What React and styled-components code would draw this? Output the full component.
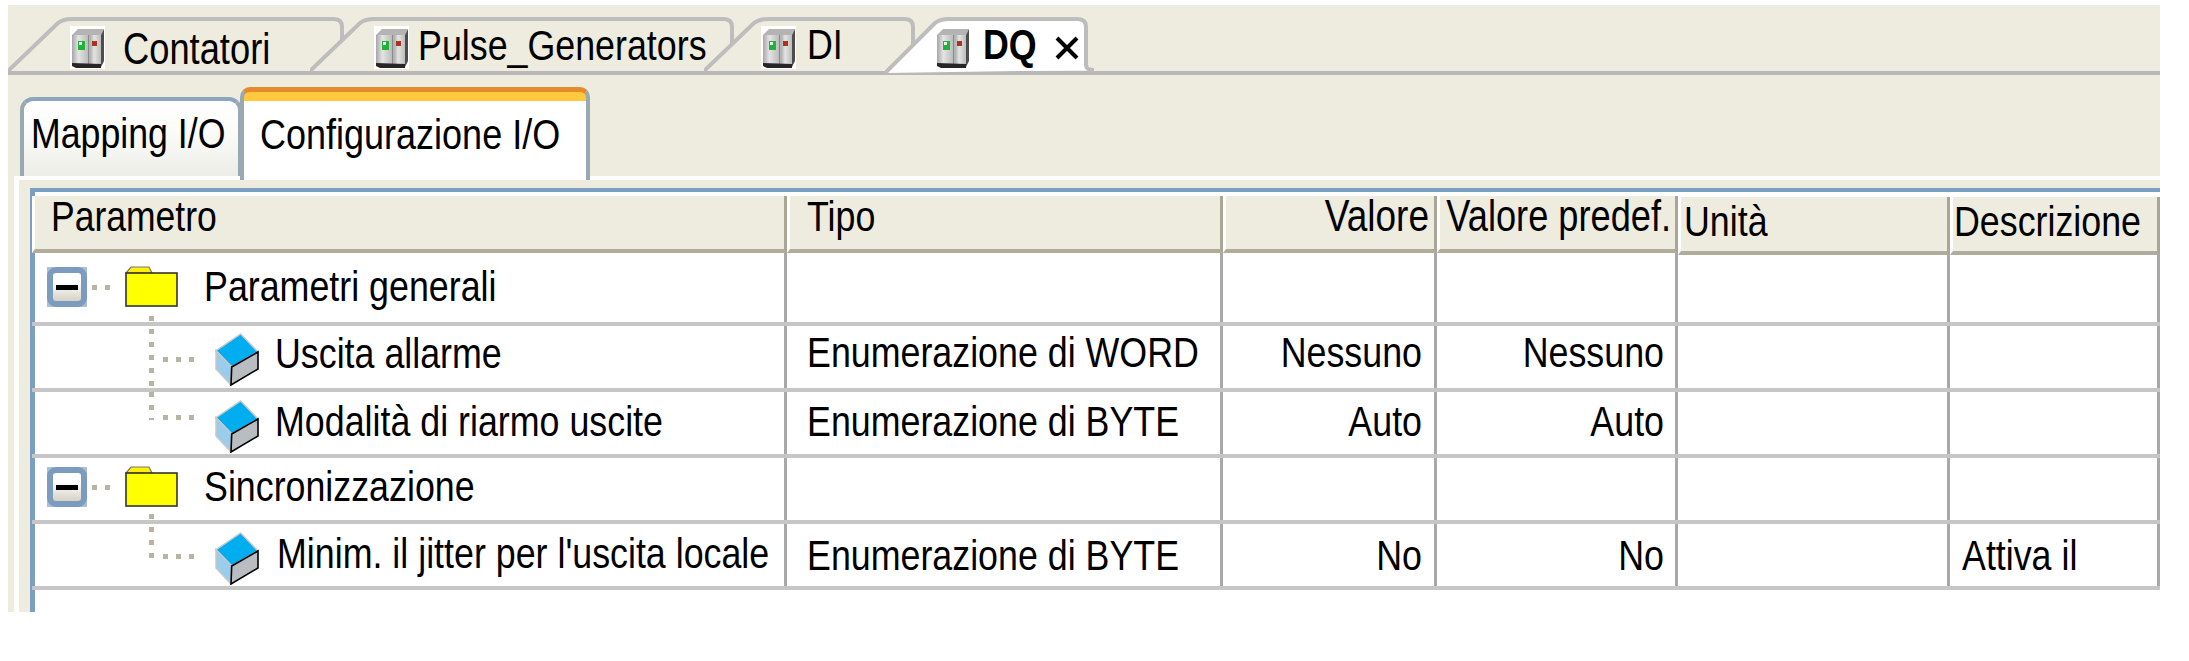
import styled, { createGlobalStyle } from "styled-components";

const GlobalStyle = createGlobalStyle`
  html, body {
    margin: 0;
    background: #fff;
    overflow: hidden;
  }
  * {
    box-sizing: border-box;
  }
`;

const BEIGE = "#eeebdf";
const COLS = "755px 436px 214px 241px 272px 210px";

const Shell = styled.div`
  width: 2152px;
  height: 607px;
  margin: 5px 0 0 8px;
  padding-top: 12px;
  background: ${BEIGE};
  overflow: hidden;
  display: flex;
  flex-direction: column;
  font-family: "Liberation Sans", Arial, sans-serif;
  color: #000;
`;

const Label = styled.span`
  display: inline-block;
  font-size: ${(p) => p.$size || 35.8}px;
  font-weight: ${(p) => (p.$bold ? 700 : 400)};
  line-height: 40px;
  white-space: nowrap;
  transform: scaleY(1.2);
`;

/* top document tabs */
const TabStrip = styled.div`
  display: flex;
  height: 58px;
  flex-shrink: 0;
  border-bottom: 4px solid #b8b8b8;
`;

const Tab = styled.div`
  position: relative;
  width: ${(p) => p.$w}px;
  height: ${(p) => (p.$active ? 58 : 54)}px;
  margin-left: ${(p) => p.$ml}px;
  padding-left: ${(p) => p.$pl}px;
  display: flex;
  align-items: flex-start;
  flex-shrink: 0;
`;

const TabOutline = styled.svg`
  position: absolute;
  left: 0;
  top: 0;
`;

const TabIcon = styled.svg`
  position: relative;
  margin-top: ${(p) => p.$y}px;
  flex-shrink: 0;
`;

const TabText = styled.div`
  position: relative;
  margin-top: ${(p) => p.$y}px;
  margin-left: ${(p) => p.$gap}px;
`;

const CloseIcon = styled.svg`
  position: relative;
  margin: 19px 0 0 18px;
  flex-shrink: 0;
`;

/* second row of tabs */
const SubTabs = styled.div`
  height: 101px;
  flex-shrink: 0;
  padding-left: 12px;
  display: flex;
  align-items: flex-end;
`;

const MappingTab = styled.div`
  width: 222px;
  height: 79px;
  padding: 13px 0 0 7px;
  border: 4px solid #9aa8b4;
  border-top-color: #8ba5bd;
  border-bottom: 0;
  border-radius: 13px 13px 0 0;
  background: linear-gradient(#fff, #fbfbf9 40%, #edede7);
`;

const ConfigTab = styled.div`
  position: relative;
  z-index: 1;
  width: 350px;
  height: 93px;
  margin: 0 0 -4px -2px;
  padding: 23px 0 0 16px;
  border: 4px solid #9aa8b4;
  border-top: 5px solid #e68a2e;
  border-bottom: 0;
  border-radius: 10px 10px 0 0;
  background: linear-gradient(#ffc83d 0 9px, #fff 9px);
`;

/* panel with the table */
const Panel = styled.div`
  flex: 1;
  margin-left: 6px;
  padding: 8px 0 0 11px;
  border-top: 4px solid #fff;
  border-left: 5px solid #fff;
  display: flex;
`;

const Frame = styled.div`
  flex: 1;
  padding-top: 4px;
  background: #fff;
  border-top: 4px solid #7a9fc2;
  border-left: 5px solid #7a9fc2;
`;

const HeaderRow = styled.div`
  height: 57px;
  margin-left: -3px;
  display: grid;
  grid-template-columns: ${COLS};
`;

const HeaderCell = styled.div`
  height: ${(p) => (p.$low ? 58 : 57)}px;
  margin-top: ${(p) => (p.$low ? 1 : 0)}px;
  padding: ${(p) => (p.$low ? 5 : 1)}px ${(p) => p.$pr || 0}px 0 ${(p) => p.$pl || 0}px;
  background: ${BEIGE};
  border-left: 3px solid #fff;
  border-right: 3px solid #a9a696;
  border-bottom: 4px solid #b0ac9c;
  text-align: ${(p) => (p.$right ? "right" : "left")};
  white-space: nowrap;
`;

const Row = styled.div`
  height: ${(p) => p.$h}px;
  margin-left: -3px;
  display: grid;
  grid-template-columns: ${COLS};
  border-bottom: 4px solid #c6c6c6;
`;

const Cell = styled.div`
  padding: ${(p) => p.$top}px ${(p) => p.$pr || 0}px 0 ${(p) => p.$pl || 0}px;
  border-right: 3px solid #a8a8a8;
  text-align: ${(p) => (p.$right ? "right" : "left")};
  white-space: nowrap;
`;

const TreeCell = styled.div`
  position: relative;
  display: flex;
  align-items: flex-start;
  padding-left: ${(p) => p.$pl}px;
  border-right: 3px solid #a8a8a8;
`;

const ExpandBox = styled.div`
  width: 40px;
  height: 40px;
  margin-top: ${(p) => p.$y}px;
  flex-shrink: 0;
  background: #a9c0d6;
  display: flex;

  &::before {
    content: "";
    flex: 1;
    border: 6px solid #7b9cbf;
    border-radius: 9px;
    background:
      linear-gradient(#000, #000) center / 22px 5px no-repeat,
      linear-gradient(#fff 30%, #d6d2c6);
  }
`;

const HDots = styled.div`
  width: ${(p) => p.$w}px;
  height: 5px;
  margin: ${(p) => p.$y}px ${(p) => p.$mr}px 0 ${(p) => p.$ml || 0}px;
  flex-shrink: 0;
  background: repeating-linear-gradient(90deg, #b8b4a4 0 5px, transparent 5px 13px);
`;

const VDots = styled.div`
  position: absolute;
  left: 117px;
  top: ${(p) => p.$top}px;
  width: 5px;
  height: ${(p) => p.$len}px;
  background: repeating-linear-gradient(180deg, #b8b4a4 0 5px, transparent 5px 13px);
`;

const IconSlot = styled.div`
  margin-top: ${(p) => p.$y}px;
  flex-shrink: 0;
  display: flex;
`;

const RowLabel = styled.div`
  margin: ${(p) => p.$y}px 0 0 ${(p) => p.$ml}px;
`;

function CabinetIcon({ y, id }) {
  return (
    <TabIcon $y={y} width="35" height="43" viewBox="0 0 35 43">
      <defs>
        <linearGradient id={id} x1="0" x2="1" y1="0" y2="0">
          <stop offset="0" stopColor="#a6a6a6" />
          <stop offset="0.4" stopColor="#e4e4e4" />
          <stop offset="1" stopColor="#bcbcbc" />
        </linearGradient>
      </defs>
      <rect width="35" height="43" fill="#fff" />
      <polygon points="2,9 8,3 34,3 31,9" fill="#b4b4b4" />
      <rect x="2" y="9" width="16" height="29" fill={`url(#${id})`} />
      <rect x="18" y="9" width="1.5" height="29" fill="#8a8a8a" />
      <rect x="19.5" y="9" width="11.5" height="29" fill={`url(#${id})`} />
      <polygon points="31,9 34,3 34,35 31,41" fill="#4d4d4d" />
      <polygon points="2,37 31,38 31,42 6,42 2,40" fill="#262626" />
      <rect x="8" y="15" width="7" height="9" fill="#22b23a" />
      <rect x="9" y="16" width="3" height="3" fill="#e6ffe6" />
      <rect x="22" y="15" width="5" height="5" fill="#a8341c" />
    </TabIcon>
  );
}

function CubeIcon() {
  return (
    <svg width="44" height="53" viewBox="0 0 44 53">
      <polygon points="25.7,1 43,19 16.7,34 1,17.7" fill="#00aeef" stroke="#c8c8c8" strokeWidth="1.5" />
      <polygon points="1,17.7 16.7,34 16,52 1,36" fill="#9accec" stroke="#c8c8c8" strokeWidth="1.5" />
      <polygon points="16.7,34 43,19 43,36 16,52" fill="#b9bdc1" stroke="#000" strokeWidth="1.6" />
    </svg>
  );
}

function FolderIcon() {
  return (
    <svg width="53" height="41" viewBox="0 0 53 41">
      <path d="M1 7 L6 1 H24 L27 7 Z" fill="#ffef00" stroke="#777" strokeWidth="1.2" />
      <rect x="1" y="7" width="51" height="33" fill="#ffff00" stroke="#333" strokeWidth="1.6" />
    </svg>
  );
}

function DocTab({ w, ml, pl, active, iconY, textY, gap, title, textSize }) {
  const h = active ? 58 : 54;
  const right = active ? w - 12 : w - 2;
  const outline = active
    ? `M0 ${h - 2} L50 6 Q55 2 64 2 H${right - 8} Q${right} 2 ${right} 10 V${h - 10} Q${right} ${h - 5} ${right + 8} ${h - 5}`
    : `M0 ${h} L50 6 Q55 2 64 2 H${right - 8} Q${right} 2 ${right} 10 V${h}`;
  return (
    <Tab $w={w} $ml={ml} $pl={pl} $active={active}>
      <TabOutline width={w} height={h}>
        <path
          d={outline}
          fill={active ? "#fff" : BEIGE}
          stroke="#bdbdbd"
          strokeWidth="4"
        />
      </TabOutline>
      <CabinetIcon y={iconY} id={`door-${title}`} />
      <TabText $y={textY} $gap={gap}>
        <Label $bold={active} $size={textSize}>
          {title}
        </Label>
      </TabText>
      {active && (
        <CloseIcon width="24" height="24" viewBox="0 0 24 24">
          <path d="M2 2 L22 22 M22 2 L2 22" stroke="#000" strokeWidth="4" />
        </CloseIcon>
      )}
    </Tab>
  );
}

const rows = [
  { group: true, h: 73, top: 14, y: 14, label: "Parametri generali", v: [{ top: 63, len: 6 }] },
  {
    h: 66, top: 8, y: 7, cube: 7, dots: 31, label: "Uscita allarme", ml: 16,
    v: [{ top: 3, len: 59 }], type: "Enumerazione di WORD", val: "Nessuno", def: "Nessuno",
  },
  {
    h: 66, top: 10, y: 10, cube: 8, dots: 23, label: "Modalità di riarmo uscite", ml: 16,
    v: [{ top: 0, len: 28 }], type: "Enumerazione di BYTE", val: "Auto", def: "Auto",
  },
  { group: true, h: 66, top: 9, y: 9, label: "Sincronizzazione", v: [{ top: 56, len: 6 }] },
  {
    h: 66, top: 10, y: 12, cube: 8, dots: 30, label: "Minim. il jitter per l'uscita locale", ml: 18,
    v: [{ top: 3, len: 33 }], type: "Enumerazione di BYTE", val: "No", def: "No", desc: "Attiva il",
  },
];

function TreeRow({ row }) {
  return (
    <Row $h={row.h}>
      <TreeCell $pl={row.group ? 15 : 131}>
        {row.v.map((v) => (
          <VDots key={v.top} $top={v.top} $len={v.len} />
        ))}
        {row.group ? (
          <>
            <ExpandBox $y={row.top} />
            <HDots $w={18} $y={row.top + 18} $ml={5} $mr={15} />
            <IconSlot $y={row.top - 1}>
              <FolderIcon />
            </IconSlot>
            <RowLabel $y={row.top} $ml={26}>
              <Label>{row.label}</Label>
            </RowLabel>
          </>
        ) : (
          <>
            <HDots $w={31} $y={row.dots} $mr={21} />
            <IconSlot $y={row.cube}>
              <CubeIcon />
            </IconSlot>
            <RowLabel $y={row.top} $ml={row.ml}>
              <Label>{row.label}</Label>
            </RowLabel>
          </>
        )}
      </TreeCell>
      <Cell $top={row.y} $pl={20}>
        <Label>{row.type}</Label>
      </Cell>
      <Cell $top={row.y} $right $pr={12}>
        <Label>{row.val}</Label>
      </Cell>
      <Cell $top={row.y} $right $pr={11}>
        <Label>{row.def}</Label>
      </Cell>
      <Cell $top={row.y} />
      <Cell $top={row.y} $pl={12}>
        <Label>{row.desc}</Label>
      </Cell>
    </Row>
  );
}

export default function App() {
  return (
    <>
      <GlobalStyle />
      <Shell>
        <TabStrip>
          <DocTab w={336} ml={0} pl={62} iconY={9} textY={13} gap={18} textSize={36.3} title="Contatori" />
          <DocTab w={424} ml={-34} pl={64} iconY={9} textY={9} gap={9} title="Pulse_Generators" />
          <DocTab w={211} ml={-30} pl={57} iconY={9} textY={8} gap={11} title="DI" />
          <DocTab w={213} ml={-30} pl={50} iconY={9} textY={8} gap={13} active title="DQ" />
        </TabStrip>
        <SubTabs>
          <MappingTab>
            <Label $size={35.7}>Mapping I/O</Label>
          </MappingTab>
          <ConfigTab>
            <Label $size={36}>Configurazione I/O</Label>
          </ConfigTab>
        </SubTabs>
        <Panel>
          <Frame>
            <HeaderRow>
              <HeaderCell $pl={16}>
                <Label $size={35.5}>Parametro</Label>
              </HeaderCell>
              <HeaderCell $pl={17}>
                <Label>Tipo</Label>
              </HeaderCell>
              <HeaderCell $right $pr={5}>
                <Label $size={37}>Valore</Label>
              </HeaderCell>
              <HeaderCell $right $pr={4}>
                <Label $size={36.2}>Valore predef.</Label>
              </HeaderCell>
              <HeaderCell $low $pl={3}>
                <Label>Unità</Label>
              </HeaderCell>
              <HeaderCell $low $pl={1}>
                <Label>Descrizione</Label>
              </HeaderCell>
            </HeaderRow>
            {rows.map((row) => (
              <TreeRow key={row.label} row={row} />
            ))}
          </Frame>
        </Panel>
      </Shell>
    </>
  );
}
